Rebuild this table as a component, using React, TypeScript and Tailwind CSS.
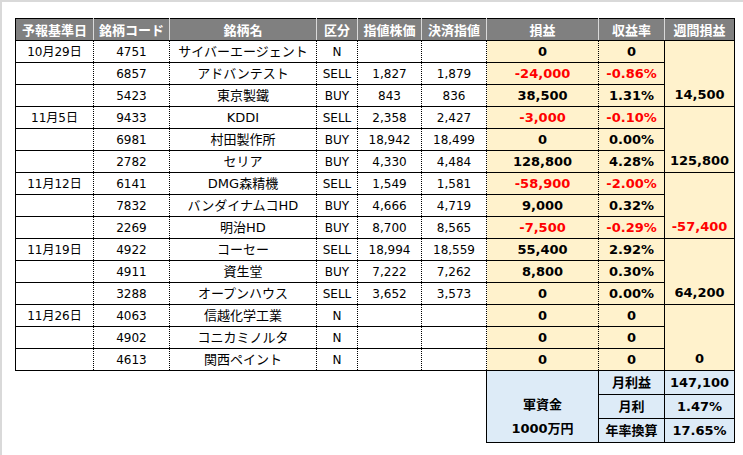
import React from "react";

type Row = {
  date: string;
  code: string;
  name: string;
  side: string;
  entry: string;
  exit: string;
  pl: string;
  rate: string;
};

type Week = { rows: Row[]; weekly: string };

const weeks: Week[] = [
  {
    weekly: "14,500",
    rows: [
      { date: "10月29日", code: "4751", name: "サイバーエージェント", side: "N", entry: "", exit: "", pl: "0", rate: "0" },
      { date: "", code: "6857", name: "アドバンテスト", side: "SELL", entry: "1,827", exit: "1,879", pl: "-24,000", rate: "-0.86%" },
      { date: "", code: "5423", name: "東京製鐵", side: "BUY", entry: "843", exit: "836", pl: "38,500", rate: "1.31%" },
    ],
  },
  {
    weekly: "125,800",
    rows: [
      { date: "11月5日", code: "9433", name: "KDDI", side: "SELL", entry: "2,358", exit: "2,427", pl: "-3,000", rate: "-0.10%" },
      { date: "", code: "6981", name: "村田製作所", side: "BUY", entry: "18,942", exit: "18,499", pl: "0", rate: "0.00%" },
      { date: "", code: "2782", name: "セリア", side: "BUY", entry: "4,330", exit: "4,484", pl: "128,800", rate: "4.28%" },
    ],
  },
  {
    weekly: "-57,400",
    rows: [
      { date: "11月12日", code: "6141", name: "DMG森精機", side: "SELL", entry: "1,549", exit: "1,581", pl: "-58,900", rate: "-2.00%" },
      { date: "", code: "7832", name: "バンダイナムコHD", side: "BUY", entry: "4,666", exit: "4,719", pl: "9,000", rate: "0.32%" },
      { date: "", code: "2269", name: "明治HD", side: "BUY", entry: "8,700", exit: "8,565", pl: "-7,500", rate: "-0.29%" },
    ],
  },
  {
    weekly: "64,200",
    rows: [
      { date: "11月19日", code: "4922", name: "コーセー", side: "SELL", entry: "18,994", exit: "18,559", pl: "55,400", rate: "2.92%" },
      { date: "", code: "4911", name: "資生堂", side: "BUY", entry: "7,222", exit: "7,262", pl: "8,800", rate: "0.30%" },
      { date: "", code: "3288", name: "オープンハウス", side: "SELL", entry: "3,652", exit: "3,573", pl: "0", rate: "0.00%" },
    ],
  },
  {
    weekly: "0",
    rows: [
      { date: "11月26日", code: "4063", name: "信越化学工業", side: "N", entry: "", exit: "", pl: "0", rate: "0" },
      { date: "", code: "4902", name: "コニカミノルタ", side: "N", entry: "", exit: "", pl: "0", rate: "0" },
      { date: "", code: "4613", name: "関西ペイント", side: "N", entry: "", exit: "", pl: "0", rate: "0" },
    ],
  },
];

const headers = ["予報基準日", "銘柄コード", "銘柄名", "区分", "指値株価", "決済指値", "損益", "収益率", "週間損益"];

// white cells: solid top/bottom, dotted between columns
const cell = "h-[22px] p-0 text-center align-middle border border-black";
const dotL = "[border-left-style:dotted]";
const dotR = "[border-right-style:dotted]";
const plain = "text-[12px] text-black";
const gold = "bg-[#fff2cc] font-bold text-[13px]";
const blue = "h-[24px] p-0 border border-black bg-[#ddebf7] text-center font-bold text-[13px] text-black";

const tone = (v: string) => (v.startsWith("-") ? "text-[#ff0000]" : "text-black");

export default function App() {
  return (
    <div className="w-[743px] h-[455px] bg-white border-t-2 border-l-2 border-[#d9d9d9] pt-4 pl-[13px] font-['DejaVu_Sans','Noto_Sans_CJK_JP',sans-serif]">
      <table className="table-fixed border-collapse w-[720px]">
        <colgroup>
          <col className="w-[78px]" />
          <col className="w-[76px]" />
          <col className="w-[147px]" />
          <col className="w-[41px]" />
          <col className="w-[64px]" />
          <col className="w-[65px]" />
          <col className="w-[112px]" />
          <col className="w-[66px]" />
          <col className="w-[70px]" />
        </colgroup>
        <thead>
          <tr>
            {headers.map((h, i) => (
              <th
                key={h}
                className={`h-[22px] p-0 bg-[#808080] text-white font-bold text-[13px] font-['Noto_Sans_CJK_JP',sans-serif] border border-y-black ${
                  i === 0 ? "border-l-black" : "border-l-[#d9d9d9]"
                } ${i === headers.length - 1 ? "border-r-black" : "border-r-[#d9d9d9]"}`}
              >
                {h}
              </th>
            ))}
          </tr>
        </thead>
        <tbody>
          {weeks.map((w) =>
            w.rows.map((r, j) => (
              <tr key={r.code}>
                <td className={`${cell} ${dotR} ${plain}`}>{r.date}</td>
                <td className={`${cell} ${dotL} ${dotR} ${plain}`}>{r.code}</td>
                <td className={`${cell} ${dotL} ${dotR} text-[13px] text-black`}>{r.name}</td>
                <td className={`${cell} ${dotL} ${dotR} ${plain}`}>{r.side}</td>
                <td className={`${cell} ${dotL} ${dotR} ${plain}`}>{r.entry}</td>
                <td className={`${cell} ${dotL} ${dotR} ${plain}`}>{r.exit}</td>
                <td className={`${cell} ${dotL} ${dotR} ${gold} ${tone(r.pl)}`}>{r.pl}</td>
                <td className={`${cell} ${dotL} ${gold} ${tone(r.rate)}`}>{r.rate}</td>
                {j === 0 && (
                  <td
                    rowSpan={w.rows.length}
                    className={`p-0 border border-black align-bottom text-center ${gold} ${tone(w.weekly)}`}
                  >
                    <div className="h-[22px] flex items-center justify-center">{w.weekly}</div>
                  </td>
                )}
              </tr>
            ))
          )}

          {/* 月次サマリー */}
          <tr>
            <td colSpan={6} className="h-[24px] p-0" />
            <td
              rowSpan={3}
              className="p-0 pb-[1px] border border-black bg-[#ddebf7] align-bottom text-center font-bold text-[13px] text-black"
            >
              <div className="h-[24px] flex items-center justify-center">軍資金</div>
              <div className="h-[24px] flex items-center justify-center">1000万円</div>
            </td>
            <td className={blue}>月利益</td>
            <td className={blue}>147,100</td>
          </tr>
          <tr>
            <td colSpan={6} className="h-[24px] p-0" />
            <td className={blue}>月利</td>
            <td className={blue}>1.47%</td>
          </tr>
          <tr>
            <td colSpan={6} className="h-[24px] p-0" />
            <td className={blue}>年率換算</td>
            <td className={blue}>17.65%</td>
          </tr>
        </tbody>
      </table>
    </div>
  );
}
